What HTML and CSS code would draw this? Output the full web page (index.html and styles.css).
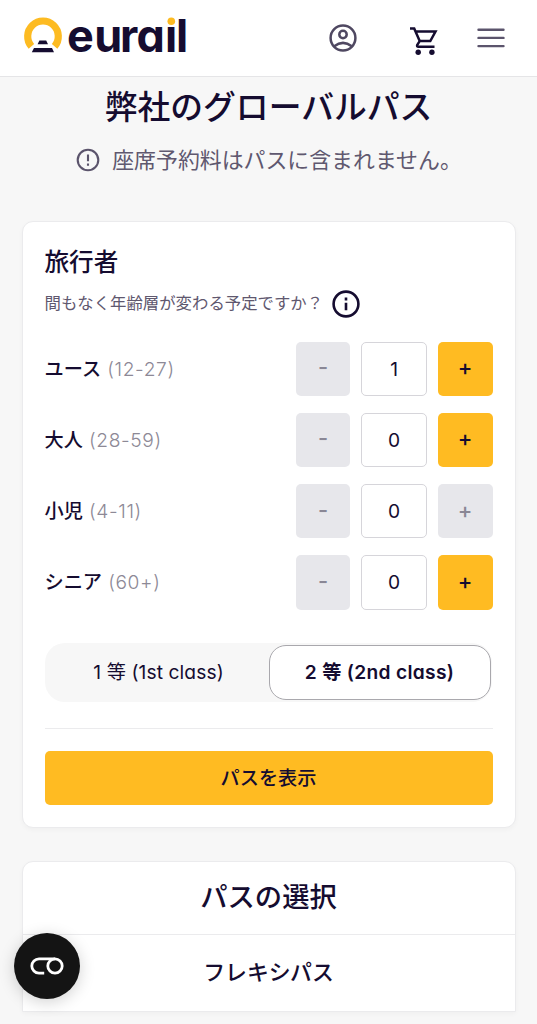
FILE: index.html
```
<!DOCTYPE html>
<html lang="ja">
<head>
  <meta charset="UTF-8" />
  <meta name="viewport" content="width=device-width, initial-scale=1" />
  <title>Eurail</title>
  <link rel="stylesheet" href="styles.css">
</head>
<body>

<header>
  <svg class="logo" width="164" height="40" viewBox="0 0 164 40">
    <path d="M8.4 29.3A15.3 15.3 0 1 1 31.6 29.3" fill="none" stroke="#fdbb22" stroke-width="7.2"/>
    <path d="M16.4 23.6h6.8l1.8 3.6H14.6z M11 31h18l2 4.2H8.8z" fill="#150c30"/>
    <text class="logo-text" x="44 71.3 97 113.6 142 153" y="35">euraıl</text>
    <circle cx="148.3" cy="4.2" r="3.8" fill="#fdbb22"/>
  </svg>
  <nav>
    <svg class="user" width="28" height="28" viewBox="0 0 28 28" fill="none" stroke="#4f4861" stroke-width="2.5">
      <circle cx="14" cy="14" r="12.4"/>
      <circle cx="14" cy="10.5" r="3.7"/>
      <path d="M5.2 22.3q8.8-6.8 17.6 0"/>
    </svg>
    <svg class="cart" width="28" height="28" viewBox="0 0 28 28" fill="none" stroke="#150c30" stroke-width="2.5">
      <path d="M0 1.5h4.2l5.5 12.6h10.6l5.2-9.6H5.6M9.7 14.1l-2.4 3.7q-.8 2 1.2 2h16"/>
      <circle cx="8.2" cy="25.2" r="2.7" fill="#150c30" stroke="none"/>
      <circle cx="21.9" cy="25.2" r="2.7" fill="#150c30" stroke="none"/>
    </svg>
    <svg class="menu" width="28" height="20" viewBox="0 0 28 20" fill="none" stroke="#5b546c" stroke-width="2.4" stroke-linecap="round">
      <path d="M1.5 1.7h25M1.5 9.9h25M1.5 18.1h25"/>
    </svg>
  </nav>
</header>

<main>
  <h1>弊社のグローバルパス</h1>
  <p class="notice">
    <svg width="24" height="24" viewBox="0 0 24 24" fill="none" stroke="#5b546c" stroke-width="2.1">
      <circle cx="12" cy="12" r="10.3"/>
      <path d="M12 6.5v6.7M12 15.4v2.4"/>
    </svg>
    <span>座席予約料はパスに含まれません。</span>
  </p>

  <section class="card travelers">
    <h2>旅行者</h2>
    <p class="age-hint">
      <span>間もなく年齢層が変わる予定ですか？</span>
      <svg width="28" height="28" viewBox="0 0 28 28" fill="none" stroke="#150c30" stroke-width="2.6">
        <circle cx="14" cy="14" r="12.4"/>
        <path d="M14 12.8v7.4M14 7.6v3"/>
      </svg>
    </p>

    <div class="rows">
      <div class="row">
        <div class="label">ユース <span>(12-27)</span></div>
        <div class="stepper"><button class="off">-</button><div class="count">1</div><button>+</button></div>
      </div>
      <div class="row">
        <div class="label">大人 <span>(28-59)</span></div>
        <div class="stepper"><button class="off">-</button><div class="count">0</div><button>+</button></div>
      </div>
      <div class="row">
        <div class="label">小児 <span>(4-11)</span></div>
        <div class="stepper"><button class="off">-</button><div class="count">0</div><button class="off">+</button></div>
      </div>
      <div class="row">
        <div class="label">シニア <span>(60+)</span></div>
        <div class="stepper"><button class="off">-</button><div class="count">0</div><button>+</button></div>
      </div>
    </div>

    <div class="classes">
      <div class="class-option">1 等 (1st class)</div>
      <div class="class-option selected">2 等 (2nd class)</div>
    </div>

    <button class="submit">パスを表示</button>
  </section>

  <section class="card passes">
    <h2>パスの選択</h2>
    <h3>フレキシパス</h3>
  </section>
</main>

<div class="consent">
  <svg width="34" height="18" viewBox="0 0 34 18" fill="none" stroke="#fff" stroke-width="2.8">
    <path d="M14.2 16.2H9A7.2 7.2 0 0 1 9 1.8h16"/>
    <circle cx="25" cy="9" r="7.2"/>
  </svg>
</div>

</body>
</html>
```
FILE: styles.css
```
:root {
  --bg: #f7f7f7;
  --dark: #150c30;
  --muted: #5f586f;
  --yellow: #ffbb22;
  --line: #ebebed;
}

* { box-sizing: border-box; margin: 0; padding: 0; }

body {
  height: 1024px;
  overflow: hidden;
  font-family: Inter, 'Noto Sans CJK JP', sans-serif;
  font-feature-settings: "cv11";
  background: var(--bg);
  color: var(--dark);
}

header {
  display: flex;
  justify-content: space-between;
  height: 77px;
  padding: 17px 32px 0 23px;
  background: #fff;
  border-bottom: 1px solid #e5e5e7;
}

.logo { overflow: visible; }

.logo-text {
  font-size: 45px;
  font-weight: 650;
  fill: var(--dark);
}

nav { display: flex; }
.user { margin: 7px 53px 0 0; }
.cart { margin: 10px 39px 0 0; }
.menu { margin-top: 11px; }

main { padding: 0 21.5px; }

h1 {
  padding-top: 5px;
  font-size: 32.8px;
  font-weight: 500;
  line-height: 50px;
  text-align: center;
}

.notice {
  display: flex;
  align-items: center;
  justify-content: center;
  gap: 12px;
  height: 34px;
  margin-top: 11px;
  padding-left: 1px;
  color: var(--muted);
  font-size: 21.9px;
  font-weight: 400;
}

.notice span { margin-top: -4px; }

.card {
  background: #fff;
  border: 1px solid var(--line);
  border-radius: 11px;
  box-shadow: 0 2px 5px rgba(0, 0, 0, .03);
}

.travelers {
  height: 607px;
  margin-top: 43.5px;
  padding: 22px 22px 0;
}

.travelers h2 {
  font-size: 24.6px;
  font-weight: 500;
  line-height: 36px;
}

.age-hint {
  display: flex;
  align-items: center;
  gap: 9px;
  height: 28px;
  margin-top: 10px;
  color: var(--muted);
  font-size: 16.4px;
}

.age-hint span { margin-top: -3px; }

.rows {
  display: flex;
  flex-direction: column;
  gap: 16.6px;
  margin-top: 24px;
}

.row {
  display: flex;
  align-items: center;
  justify-content: space-between;
  height: 54.6px;
}

.label {
  padding-bottom: 2px;
  font-size: 19.2px;
  font-weight: 500;
}

.label span {
  margin-left: 1px;
  color: #8d8996;
  font-weight: 300;
  letter-spacing: .6px;
}

.stepper {
  display: flex;
  gap: 10.8px;
}

button {
  width: 54.6px;
  height: 54.6px;
  padding-bottom: 3px;
  border: 0;
  border-radius: 5px;
  background: var(--yellow);
  color: var(--dark);
  font: 500 22px Inter, 'Noto Sans CJK JP', sans-serif;
}

button.off {
  background: #e7e7eb;
  color: #8a8795;
}

.count {
  display: flex;
  align-items: center;
  justify-content: center;
  width: 66px;
  border: 1px solid #d6d5da;
  border-radius: 5px;
  font-size: 19.2px;
}

.classes {
  display: flex;
  align-items: center;
  height: 59px;
  margin-top: 33px;
  margin-right: 1px;
  padding-right: 1px;
  border-radius: 20px;
  background: var(--bg);
}

.class-option {
  flex: 1;
  padding-left: 4px;
  font-size: 19.2px;
  line-height: 53px;
  letter-spacing: .1px;
  text-align: center;
}

.class-option.selected {
  flex: 0 0 222px;
  padding-left: 0;
  border: 1px solid #a9a8ad;
  border-radius: 17px;
  background: #fff;
  font-weight: 600;
  letter-spacing: .3px;
}

.submit {
  position: relative;
  width: 100%;
  margin-top: 49px;
  padding-bottom: 2px;
  font-size: 19.2px;
}

/* divider above the submit button */
.submit::before {
  content: "";
  position: absolute;
  top: -23px;
  left: 0;
  right: 0;
  height: 1px;
  background: var(--line);
}

.passes {
  height: 151px;
  margin-top: 33.5px;
  border-radius: 11px 11px 0 0;
  text-align: center;
}

.passes h2 {
  height: 73px;
  border-bottom: 1px solid var(--line);
  font-size: 27.3px;
  font-weight: 500;
  line-height: 72px;
}

.passes h3 {
  font-size: 21.9px;
  font-weight: 500;
  line-height: 74px;
}

.consent {
  position: fixed;
  left: 14px;
  bottom: 25px;
  display: flex;
  align-items: center;
  justify-content: center;
  width: 66px;
  height: 66px;
  border-radius: 50%;
  background: #141414;
  box-shadow: 0 3px 16px rgba(0, 0, 0, .18);
}
```
